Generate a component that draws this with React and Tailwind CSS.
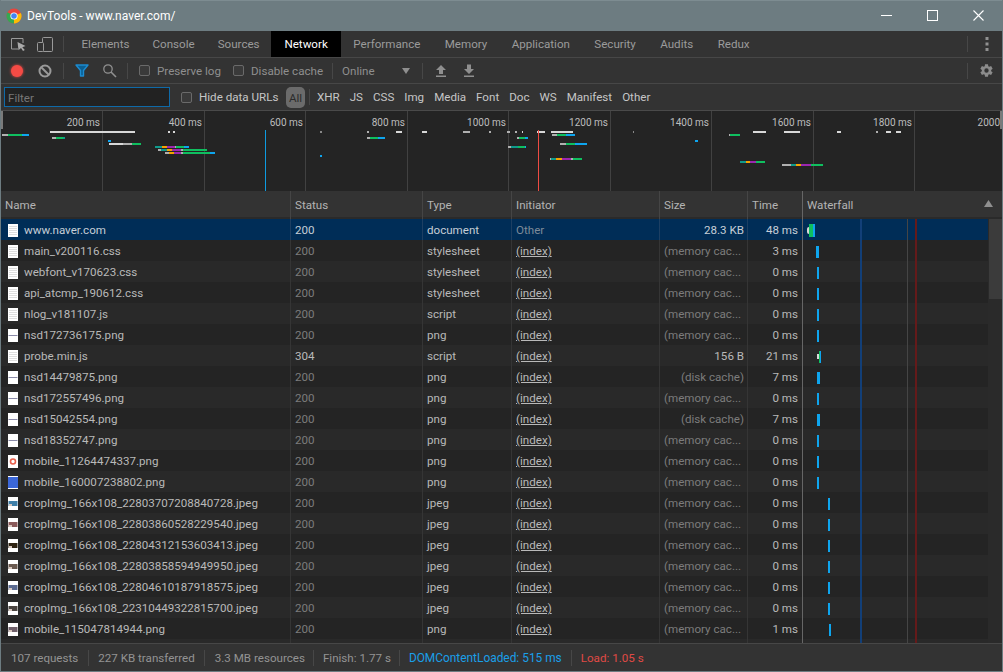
const font = { fontFamily: 'Roboto, "Noto Sans", sans-serif' };

const tabs = [
  "Elements",
  "Console",
  "Sources",
  "Network",
  "Performance",
  "Memory",
  "Application",
  "Security",
  "Audits",
  "Redux",
];
const tabPad = {
  Elements: "px-[11.5px]",
  Console: "px-[11.5px]",
  Sources: "px-[11.5px]",
  Network: "w-[70px] justify-center",
};
const types = ["XHR", "JS", "CSS", "Img", "Media", "Font", "Doc", "WS", "Manifest", "Other"];

const mem = "(memory cac...";
const disk = "(disk cache)";

const rows = [
  { name: "www.naver.com", status: "200", type: "document", init: "Other", size: "28.3 KB", time: "48 ms", bar: 0, w: 5, first: true },
  { name: "main_v200116.css", status: "200", type: "stylesheet", size: mem, time: "3 ms", bar: 13, w: 3 },
  { name: "webfont_v170623.css", status: "200", type: "stylesheet", size: mem, time: "0 ms", bar: 14, w: 2 },
  { name: "api_atcmp_190612.css", status: "200", type: "stylesheet", size: mem, time: "0 ms", bar: 14, w: 2 },
  { name: "nlog_v181107.js", status: "200", type: "script", size: mem, time: "0 ms", bar: 14, w: 2 },
  { name: "nsd172736175.png", status: "200", type: "png", size: mem, time: "0 ms", bar: 14, w: 2, thumb: "line" },
  { name: "probe.min.js", status: "304", type: "script", size: "156 B", time: "21 ms", bar: 17, w: 1, probe: true },
  { name: "nsd14479875.png", status: "200", type: "png", size: disk, time: "7 ms", bar: 14, w: 3, thumb: "line" },
  { name: "nsd172557496.png", status: "200", type: "png", size: mem, time: "0 ms", bar: 14, w: 2, thumb: "line" },
  { name: "nsd15042554.png", status: "200", type: "png", size: disk, time: "7 ms", bar: 14, w: 3, thumb: "line" },
  { name: "nsd18352747.png", status: "200", type: "png", size: mem, time: "0 ms", bar: 14, w: 2, thumb: "line" },
  { name: "mobile_11264474337.png", status: "200", type: "png", size: mem, time: "0 ms", bar: 14, w: 2, thumb: "ring" },
  { name: "mobile_160007238802.png", status: "200", type: "png", size: mem, time: "0 ms", bar: 14, w: 2, thumb: "blue" },
  { name: "cropImg_166x108_22803707208840728.jpeg", status: "200", type: "jpeg", size: mem, time: "0 ms", bar: 25, w: 2, thumb: "#3f7fa8" },
  { name: "cropImg_166x108_22803860528229540.jpeg", status: "200", type: "jpeg", size: mem, time: "0 ms", bar: 25, w: 2, thumb: "#8a5a5a" },
  { name: "cropImg_166x108_22804312153603413.jpeg", status: "200", type: "jpeg", size: mem, time: "0 ms", bar: 25, w: 2, thumb: "#2f2413" },
  { name: "cropImg_166x108_22803858594949950.jpeg", status: "200", type: "jpeg", size: mem, time: "0 ms", bar: 25, w: 2, thumb: "#6a5a50" },
  { name: "cropImg_166x108_22804610187918575.jpeg", status: "200", type: "jpeg", size: mem, time: "0 ms", bar: 25, w: 2, thumb: "#5a6a90" },
  { name: "cropImg_166x108_22310449322815700.jpeg", status: "200", type: "jpeg", size: mem, time: "0 ms", bar: 25, w: 2, thumb: "#4a4440" },
  { name: "mobile_115047814944.png", status: "200", type: "png", size: mem, time: "1 ms", bar: 26, w: 2, thumb: "#70606a" },
  { name: "", status: "", type: "", size: "", time: "", noInit: true, bar: 26, w: 2 },
];

// overview chart segments: [y, x1, x2, colour]
const W = "#d8d8d8";
const G = "#b0b0b0";
const GR = "#0fbf5f";
const B = "#0ea5ee";
const T = "#0f9a8c";
const O = "#f5a300";
const P = "#9c27b0";
const segs = [
  [131, 50, 135, W], [131, 168, 170, W], [131, 173, 175, W], [131, 320, 322, "#888"], [131, 367, 369, G],
  [131, 396, 402, W], [131, 422, 427, W], [131, 463, 470, G], [131, 489, 491, G], [131, 507, 510, G],
  [131, 515, 517, G], [131, 522, 523, W], [131, 537, 545, W], [131, 551, 573, W], [131, 633, 634, "#888"],
  [131, 753, 766, W], [131, 784, 800, W], [131, 837, 841, W], [131, 876, 878, G], [131, 886, 891, W], [131, 896, 901, W],
  [134, 2, 8, G], [134, 8, 22, GR], [134, 22, 29, B],
  [134, 552, 557, G], [134, 557, 566, GR], [134, 566, 575, B], [134, 729, 730, G], [134, 730, 740, GR],
  [137, 52, 56, G], [137, 56, 63, GR], [137, 63, 65, T], [137, 367, 370, G], [137, 370, 378, GR], [137, 378, 385, B],
  [137, 517, 519, G], [137, 519, 525, GR], [137, 525, 528, B],
  [140, 108, 111, B], [140, 695, 698, B],
  [143, 109, 123, W], [143, 123, 132, G], [143, 132, 141, GR], [143, 560, 566, G], [143, 566, 575, GR], [143, 575, 587, B],
  [146, 155, 162, T], [146, 162, 167, O], [146, 167, 175, P], [146, 175, 176, G], [146, 176, 184, GR], [146, 184, 189, B],
  [146, 508, 511, G], [146, 511, 518, T], [146, 518, 525, GR], [146, 525, 526, B],
  [149, 158, 161, G], [149, 161, 167, T], [149, 167, 172, O], [149, 172, 181, P], [149, 181, 183, G], [149, 183, 207, GR],
  [152, 165, 169, G], [152, 169, 174, O], [152, 174, 181, P], [152, 181, 183, G], [152, 183, 210, GR], [152, 210, 215, B],
  [155, 320, 322, B],
  [158, 550, 551, G], [158, 551, 556, T], [158, 556, 562, O], [158, 562, 571, P], [158, 571, 573, G], [158, 573, 582, GR],
  [161, 740, 746, T], [161, 746, 750, O], [161, 750, 756, P], [161, 756, 765, GR],
  [164, 782, 791, G], [164, 791, 796, T], [164, 796, 801, O], [164, 801, 811, P], [164, 811, 823, GR],
];
const ticks = [
  [102, "200 ms"], [204, "400 ms"], [305, "600 ms"], [407, "800 ms"], [508, "1000 ms"],
  [610, "1200 ms"], [711, "1400 ms"], [813, "1600 ms"], [914, "1800 ms"], [1002, "2000"],
];

function ChromeLogo() {
  return (
    <svg width="16" height="16" viewBox="0 0 16 16" className="shrink-0">
      <circle cx="8" cy="8" r="7.5" fill="#e8453c" />
      <path d="M8 8 L1.5 4.2 A7.5 7.5 0 0 0 8 15.5 Z" fill="#34a853" />
      <path d="M8 8 L14.9 5 A7.5 7.5 0 0 1 8 15.5 Z" fill="#fbbc05" />
      <circle cx="8" cy="8" r="3.6" fill="#fff" />
      <circle cx="8" cy="8" r="2.8" fill="#4285f4" />
    </svg>
  );
}

function Sep({ className = "h-[16px]" }) {
  return <div className={`w-px bg-[#474747] shrink-0 ${className}`} />;
}

function Check({ className = "" }) {
  return <div className={`w-[11px] h-[11px] rounded-[2px] border border-[#6a6a6a] bg-[#3a3a3a] shrink-0 ${className}`} />;
}

function FileIcon({ thumb }) {
  return (
    <svg width="10" height="13" viewBox="0 0 10 13" className="shrink-0">
      <rect width="10" height="13" fill="#fff" />
      {!thumb &&
        [2, 4, 6, 8, 10].map((y) => <rect key={y} x="1" y={y} width="8" height="1" fill="#dedede" />)}
      {thumb === "line" && <rect x="0.5" y="6" width="9" height="1" fill="#8a8aa8" />}
      {thumb === "ring" && <circle cx="5" cy="6.5" r="2.5" fill="none" stroke="#e8604c" strokeWidth="1.6" />}
      {thumb === "blue" && <rect x="0" y="1" width="10" height="11" fill="#3b67d8" />}
      {thumb && !["line", "ring", "blue"].includes(thumb) && (
        <>
          <rect x="0.5" y="4" width="9" height="5" fill={thumb} />
          <rect x="1" y="7" width="3" height="2" fill="#d8c8c0" />
        </>
      )}
    </svg>
  );
}

function WaterfallBar({ row }) {
  if (row.first)
    return (
      <div className="flex items-center h-full ml-[4px]">
        <div className="w-[2px] h-[7px] bg-[#d8d8d8] rounded-l-full" />
        <div className="w-[4px] h-[13px] bg-[#0fbf5f]" />
        <div className="w-[2px] h-[13px] bg-[#0ea5ee]" />
      </div>
    );
  if (row.probe)
    return (
      <div className="flex items-center h-full ml-[14px]">
        <div className="w-[2px] h-[5px] bg-[#d8d8d8]" />
        <div className="w-px h-[12px] bg-[#0fbf5f]" />
        <div className="w-px h-[12px] bg-[#0ea5ee]" />
      </div>
    );
  return (
    <div className="flex items-center h-full" style={{ marginLeft: row.bar }}>
      <div className="h-[12px] bg-[#0ea5ee]" style={{ width: row.w }} />
    </div>
  );
}

function Row({ row, index }) {
  const selected = index === 0;
  const bg = selected ? "bg-[#002d57]" : index % 2 === 0 ? "bg-[#292929]" : "bg-[#242424]";
  const bright = row.first ? "text-[#c6ced6]" : "text-[#b9b9b9]";
  const dim = selected ? "text-[#7d8b99]" : "text-[#7c7c7c]";
  const statusColor = row.first || row.status === "304" ? bright : dim;
  const sizeColor = row.size === mem || row.size === disk ? dim : bright;
  const sep = selected ? "border-[#1d3f63]" : "border-[#353535]";
  return (
    <div className={`grid grid-cols-[290px_132px_89px_148px_88px_55px_185px] h-[21px] leading-[23px] ${bg}`}>
      <div className={`flex items-center gap-[6px] pl-[7px] border-r ${sep} ${bright}`}>
        <FileIcon thumb={row.thumb} />
        <span className="whitespace-nowrap">{row.name}</span>
      </div>
      <div className={`pl-[4px] border-r ${sep} ${statusColor}`}>{row.status}</div>
      <div className={`pl-[4px] border-r ${sep} ${bright}`}>{row.type}</div>
      <div className={`pl-[4px] border-r ${sep}`}>
        {row.init ? <span className={dim}>{row.init}</span> : !row.noInit && <span className={`underline ${bright}`}>(index)</span>}
      </div>
      <div className={`pl-[4px] pr-[3px] text-right whitespace-nowrap overflow-hidden border-r ${sep} ${sizeColor}`}>
        <span className={row.size === mem ? "block text-left" : ""}>{row.size}</span>
      </div>
      <div className={`pr-[4px] text-right border-r border-[#666] ${bright}`}>{row.time}</div>
      <WaterfallBar row={row} />
    </div>
  );
}

function Overview() {
  return (
    <div className="relative h-[81px] bg-[#242424] border-t border-[#4a4a4a] overflow-hidden">
      <svg width="1001" height="80" viewBox="1 111 1001 80" className="absolute left-0 top-0">
        {ticks.slice(0, 9).map(([x]) => (
          <rect key={x} x={x} y="111" width="1" height="80" fill="#414141" />
        ))}
        {segs.map(([y, a, b, c], i) => (
          <rect key={i} x={a} y={y} width={b - a} height="2" fill={c} />
        ))}
        <rect x="265" y="130" width="1" height="61" fill="#0e9be0" />
        <rect x="538" y="130" width="1" height="61" fill="#ef4b43" />
      </svg>
      {ticks.map(([x, label]) => (
        <span
          key={label}
          className="absolute top-[4px] text-[10px] leading-[15px] text-[#bdbdbd] whitespace-nowrap"
          style={{ right: 1002 - x + 2 }}
        >
          {label}
        </span>
      ))}
      <div className="absolute left-0 top-0 w-[2px] h-[18px] bg-[#7a7a7a]" />
      <div className="absolute right-0 top-0 w-[2px] h-[18px] bg-[#7a7a7a]" />
    </div>
  );
}

export default function App() {
  return (
    <div
      className="w-[1003px] h-[672px] overflow-hidden flex flex-col bg-[#6d7c81] text-[11.6px] px-px pb-px"
      style={font}
    >
      {/* title bar */}
      <div className="h-[31px] shrink-0 flex items-center pl-[5px] border-t border-[#7d8c91]">
        <ChromeLogo />
        <span className="ml-[5px] text-white text-[12px]">DevTools - www.naver.com/</span>
        <div className="ml-auto flex items-center">
          <svg width="46" height="30" viewBox="0 0 46 30">
            <rect x="17" y="14" width="11" height="1" fill="#fff" />
          </svg>
          <svg width="46" height="30" viewBox="0 0 46 30">
            <rect x="17.5" y="9.5" width="10" height="10" fill="none" stroke="#fff" />
          </svg>
          <svg width="46" height="30" viewBox="0 0 46 30">
            <path d="M17.5 9.5 L27.5 19.5 M27.5 9.5 L17.5 19.5" stroke="#fff" strokeWidth="1.1" />
          </svg>
        </div>
      </div>

      {/* tabs */}
      <div className="h-[27px] shrink-0 flex items-center bg-[#333] border-b border-[#474747]">
        <svg width="20" height="16" viewBox="0 0 20 16" className="ml-[8px] shrink-0">
          <path d="M9 13 H2.5 V2.5 H14 V7" fill="none" stroke="#9a9a9a" strokeWidth="1" />
          <path d="M8.5 6 L16.5 10 L13.3 11.2 L15.8 14 L14 15 L12 12 L9.5 14.2 Z" fill="#aaa" />
        </svg>
        <svg width="18" height="17" viewBox="0 0 18 17" className="ml-[7px] shrink-0">
          <rect x="6.5" y="1.5" width="10" height="14" rx="1" fill="none" stroke="#9a9a9a" />
          <rect x="1.5" y="6.5" width="6" height="9" rx="1" fill="#333" stroke="#9a9a9a" />
        </svg>
        <Sep className="h-[16px] ml-[9px]" />
        <div className="flex h-full ml-[6px]">
          {tabs.map((t) => (
            <div
              key={t}
              className={`h-full flex items-center pt-[2px] ${tabPad[t] || "px-[12.2px]"} ${t === "Network" ? "bg-black text-white" : "text-[#9b9b9b]"}`}
            >
              {t}
            </div>
          ))}
        </div>
        <Sep className="h-[16px] ml-auto" />
        <svg width="4" height="14" viewBox="0 0 4 14" className="ml-[17px] mr-[13px] shrink-0">
          <rect x="0.5" y="0" width="3" height="3" fill="#909090" />
          <rect x="0.5" y="5.5" width="3" height="3" fill="#909090" />
          <rect x="0.5" y="11" width="3" height="3" fill="#909090" />
        </svg>
      </div>

      {/* network toolbar */}
      <div className="h-[26px] shrink-0 flex items-center bg-[#333] border-b border-[#474747] text-[#8f8f8f]">
        <div className="w-[12px] h-[12px] rounded-full bg-[#f44b45] ml-[10px] shadow-[0_0_3px_#f44b45] shrink-0" />
        <svg width="14" height="14" viewBox="0 0 14 14" className="ml-[15px] shrink-0">
          <circle cx="7" cy="7" r="5.5" fill="none" stroke="#9a9a9a" strokeWidth="2" />
          <path d="M3 3 L11 11" stroke="#9a9a9a" strokeWidth="2" />
        </svg>
        <Sep className="h-[16px] ml-[11px]" />
        <svg width="14" height="13" viewBox="0 0 14 13" className="ml-[11px] shrink-0">
          <path d="M1 1 H13 L8.5 6.5 V12 H5.5 V6.5 Z" fill="#0b5f92" stroke="#1c8bd0" strokeWidth="1.4" strokeLinejoin="round" />
        </svg>
        <svg width="15" height="15" viewBox="0 0 15 15" className="ml-[13px] shrink-0">
          <circle cx="6" cy="6" r="4.2" fill="none" stroke="#909090" strokeWidth="1.3" />
          <path d="M9 9 L14 14" stroke="#909090" strokeWidth="1.6" />
        </svg>
        <Sep className="h-[16px] ml-[10px]" />
        <Check className="ml-[11px]" />
        <span className="ml-[7px] pt-[2px] w-[64px] whitespace-nowrap">Preserve log</span>
        <Check className="ml-[12px]" />
        <span className="ml-[7px] pt-[2px] w-[72px] whitespace-nowrap">Disable cache</span>
        <Sep className="h-[16px] ml-[9px]" />
        <span className="ml-[9px] pt-[2px] w-[60px]">Online</span>
        <svg width="8" height="6" viewBox="0 0 8 6" className="shrink-0">
          <path d="M0 0 H8 L4 6 Z" fill="#8f8f8f" />
        </svg>
        <Sep className="h-[16px] ml-[12px]" />
        <svg width="12" height="13" viewBox="0 0 12 13" className="ml-[12px] shrink-0">
          <path d="M6 1 L11 6 H8 V10 H4 V6 H1 Z M1 11.5 H11 V13 H1 Z" fill="#8f8f8f" />
        </svg>
        <svg width="12" height="13" viewBox="0 0 12 13" className="ml-[16px] shrink-0">
          <path d="M4 0.5 H8 V5 H11 L6 10 L1 5 H4 Z M1 11.5 H11 V13 H1 Z" fill="#8f8f8f" />
        </svg>
        <Sep className="h-[16px] ml-auto" />
        <svg width="15" height="15" viewBox="0 0 24 24" className="ml-[11px] mr-[8px] shrink-0">
          <path
            d="M19.4 13a7.6 7.6 0 0 0 0-2l2.4-1.9-2.4-4.2-2.9 1.2a7.4 7.4 0 0 0-1.7-1L14.4 2H9.6l-.4 3.1a7.4 7.4 0 0 0-1.7 1L4.6 4.9 2.2 9.1 4.6 11a7.6 7.6 0 0 0 0 2l-2.4 1.9 2.4 4.2 2.9-1.2a7.4 7.4 0 0 0 1.7 1l.4 3.1h4.8l.4-3.1a7.4 7.4 0 0 0 1.7-1l2.9 1.2 2.4-4.2zM12 15.5a3.5 3.5 0 1 1 0-7 3.5 3.5 0 0 1 0 7z"
            fill="#8c8c8c"
          />
        </svg>
      </div>

      {/* filter bar */}
      <div className="h-[26px] shrink-0 flex items-center bg-[#333] text-[#c6c6c6]">
        <div className="ml-[3px] w-[166px] h-[20px] border border-[#0f6aa8] bg-[#222] text-[#777] pl-[3px] leading-[20px] shrink-0">
          Filter
        </div>
        <Check className="ml-[11px]" />
        <span className="ml-[7px] pt-[2px] w-[81px] whitespace-nowrap">Hide data URLs</span>
        <div className="ml-[6px] w-[19px] h-[21px] rounded-[5px] bg-[#6b6b6b] text-[#2b2b2b] text-center leading-[22px] shrink-0">
          All
        </div>
        <Sep className="h-[16px] ml-[4px]" />
        <div className="flex ml-[2px] pt-[2px]">
          {types.map((t) => (
            <span key={t} className="px-[5px]">
              {t}
            </span>
          ))}
        </div>
      </div>

      <Overview />

      {/* table header */}
      <div className="h-[28px] shrink-0 grid grid-cols-[290px_132px_89px_148px_88px_55px_199px] items-stretch bg-[#333] text-[#b4b4b4] leading-[29px] border-b-2 border-[#2a2a2a]">
        {["Name", "Status", "Type", "Initiator", "Size", "Time"].map((h) => (
          <div key={h} className={`border-r pl-[4px] ${h === "Time" ? "border-[#666]" : "border-[#454545]"}`}>
            {h}
          </div>
        ))}
        <div className="relative pl-[4px]">
          Waterfall
          <svg width="9" height="7" viewBox="0 0 9 7" className="absolute right-[9px] top-[9px]">
            <path d="M4.5 0 L9 7 H0 Z" fill="#8f8f8f" />
          </svg>
        </div>
      </div>

      {/* rows */}
      <div className="flex-1 min-h-0 flex overflow-hidden bg-[#242424]">
        <div className="relative w-[987px] shrink-0">
          {rows.map((row, i) => (
            <Row key={i} row={row} index={i} />
          ))}
          <div className="absolute top-0 bottom-0 left-[859px] w-[2px] bg-[#123f78]" />
          <div className="absolute top-0 bottom-0 left-[906px] w-px bg-[#454545]" />
          <div className="absolute top-0 bottom-0 left-[914px] w-[2px] bg-[#641a1a]" />
        </div>
        <div className="w-[14px] shrink-0 bg-[#2a2a2a] pl-px">
          <div className="h-[80px] bg-[#3b3b3b]" />
        </div>
      </div>

      {/* status bar */}
      <div className="h-[28px] shrink-0 flex items-center bg-[#333] border-t border-[#474747] text-[#939393]">
        <span className="pl-[10px] pr-[10px] pt-[2px]">107 requests</span>
        <Sep />
        <span className="pl-[9px] pr-[9px] pt-[2px]">227 KB transferred</span>
        <Sep />
        <span className="pl-[10px] pr-[8px] pt-[2px]">3.3 MB resources</span>
        <Sep />
        <span className="pl-[9px] pr-[8px] pt-[2px]">Finish: 1.77 s</span>
        <Sep />
        <span className="pl-[9px] pr-[9px] pt-[2px] text-[11.9px] text-[#1a9fe8]">DOMContentLoaded: 515 ms</span>
        <Sep />
        <span className="pl-[9px] pt-[2px] text-[#e04a45]">Load: 1.05 s</span>
      </div>
    </div>
  );
}
